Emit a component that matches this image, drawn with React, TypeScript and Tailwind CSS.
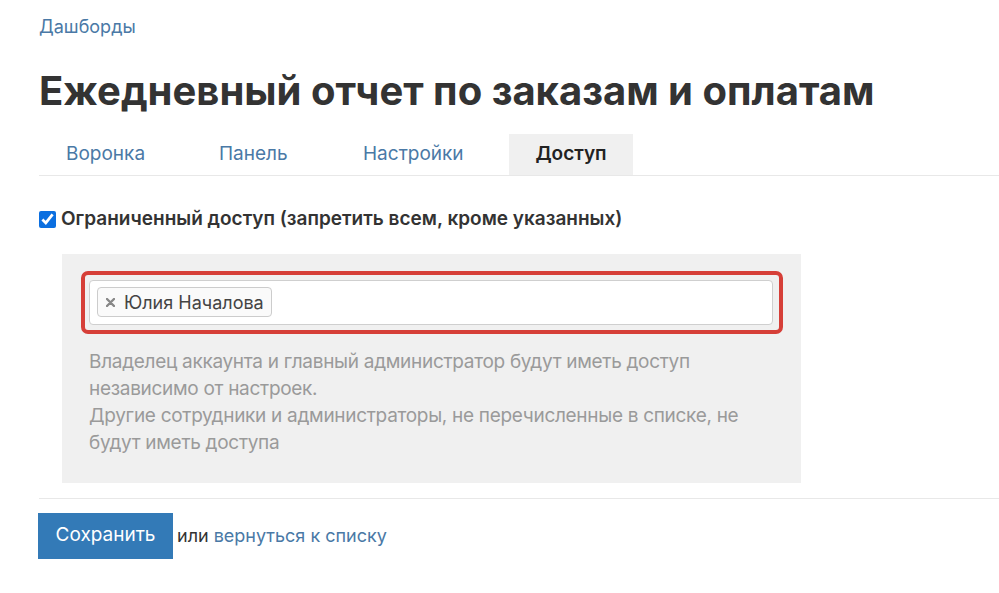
import React, { useState } from 'react';

const tabs = [
  { label: 'Воронка', cls: 'w-[142px] pl-[27px]' },
  { label: 'Панель', cls: 'w-[144px] pl-[38px]' },
  { label: 'Настройки', cls: 'w-[174px] pl-[38px]' },
];

const App: React.FC = () => {
  const [restricted, setRestricted] = useState(true);
  const [users, setUsers] = useState(['Юлия Началова']);

  return (
    <div className="min-h-[593px] bg-white pl-[39px] font-['Inter',sans-serif] text-[#333]">
      <div className="pt-[15px]">
        <a href="#" className="text-[18px] leading-[24px] text-[#4a79a6]">
          Дашборды
        </a>
      </div>

      <h1 className="mt-[28px] text-[40px] font-bold leading-[48px] text-[#333]">
        Ежедневный отчет по заказам и оплатам
      </h1>

      <div className="mt-[19px] flex border-b border-[#e8e8e8]">
        {tabs.map((t) => (
          <a
            key={t.label}
            href="#"
            className={`flex h-[41px] items-center text-[19px] text-[#4a79a6] ${t.cls}`}
          >
            {t.label}
          </a>
        ))}
        <a
          href="#"
          className="ml-[10px] flex h-[41px] w-[124px] items-center justify-center bg-[#f0f0f0] text-[19px] font-semibold text-[#222]"
        >
          Доступ
        </a>
      </div>

      <label className="mt-[29px] flex items-center gap-[5px] text-[19px] font-semibold text-[#333]">
        <input
          type="checkbox"
          checked={restricted}
          onChange={(e) => setRestricted(e.target.checked)}
          className="h-[17px] w-[17px] accent-[#0b6fe0]"
        />
        Ограниченный доступ (запретить всем, кроме указанных)
      </label>

      <div className="ml-[23px] mt-[20px] w-[739px] bg-[#f0f0f0] pb-[27px] pl-[19px] pr-[18px] pt-[17px]">
        <div className="rounded-[7px] border-[4px] border-[#d63f38] py-[5px] pl-[4px] pr-[6px]">
          <div className="flex h-[45px] items-center rounded-[4px] border border-[#cfcfcf] bg-white px-[7px]">
            {users.map((u) => (
              <span
                key={u}
                className="flex h-[30px] items-center gap-[9px] rounded-[4px] border border-[#cccccc] bg-[#fafafa] pl-[8px] pr-[7px] text-[18px] text-[#444]"
              >
                <button
                  type="button"
                  onClick={() => setUsers(users.filter((x) => x !== u))}
                  className="flex items-center"
                >
                  <svg width="9" height="9" viewBox="0 0 9 9">
                    <path d="M1 1L8 8M8 1L1 8" stroke="#888" strokeWidth="2.4" strokeLinecap="round" />
                  </svg>
                </button>
                {u}
              </span>
            ))}
          </div>
        </div>
        <p className="ml-[8px] mt-[14px] text-[19px] leading-[27px] tracking-[-0.3px] text-[#9a9a9a]">
          Владелец аккаунта и главный администратор будут иметь доступ
          <br />
          независимо от настроек.
          <br />
          Другие сотрудники и администраторы, не перечисленные в списке, не
          <br />
          будут иметь доступа
        </p>
      </div>

      <div className="mt-[15px] border-t border-[#e8e8e8] pt-[14px]">
        <div className="flex items-center">
          <button
            type="button"
            className="-ml-px h-[46px] w-[135px] bg-[#337ab7] text-[19px] text-white"
          >
            Сохранить
          </button>
          <span className="ml-[4px] text-[18px] text-[#333]">или</span>
          <a href="#" className="ml-[5px] text-[18px] text-[#4a79a6]">
            вернуться к списку
          </a>
        </div>
      </div>
    </div>
  );
};

export default App;
